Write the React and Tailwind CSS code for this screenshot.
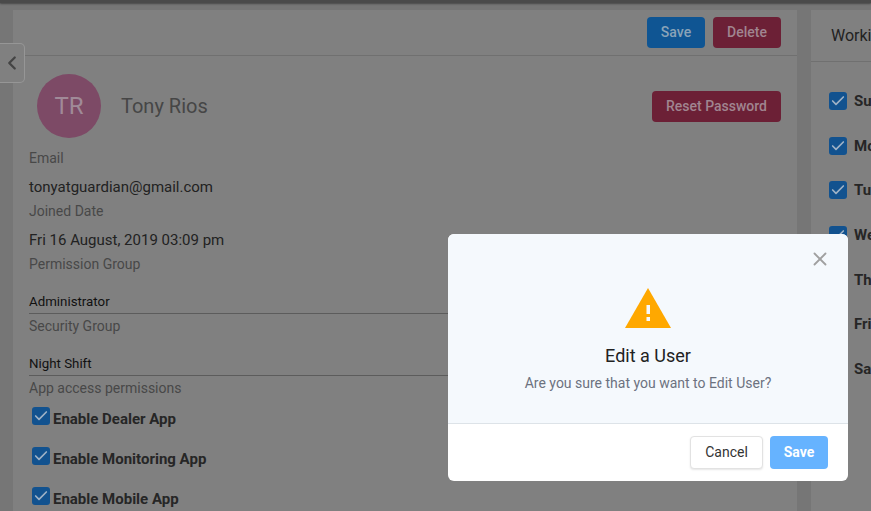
import { ChevronLeft, Check, X } from "lucide-react";

const font = { fontFamily: "Roboto, sans-serif" };

function Box() {
  return (
    <span className="flex h-[18px] w-[18px] shrink-0 items-center justify-center rounded-[3px] bg-[#12528f]">
      <Check size={16} strokeWidth={2.5} className="text-[#9fb2c6]" />
    </span>
  );
}

function AppRow({ label }) {
  return (
    <div className="ml-[3px] flex h-[40px] items-start gap-[3px]">
      <Box />
      <span className="mt-[2px] text-[15px] leading-[20px] font-bold text-[#262626]">{label}</span>
    </div>
  );
}

function DayRow({ label }) {
  return (
    <div className="flex h-[44.7px] items-start gap-[7px]">
      <Box />
      <span className="text-[15px] leading-[18px] font-bold whitespace-nowrap text-[#262626]">{label}</span>
    </div>
  );
}

export default function App() {
  return (
    <div style={font} className="relative h-[511px] w-[871px] overflow-hidden bg-[#767676]">
      <div className="h-[3px] bg-[#4a4a4a] shadow-[0_1px_2px_rgba(0,0,0,0.4)]" />

      <div className="flex gap-[14px] pt-[7px] pl-[13px]">
        {/* user panel */}
        <div className="h-[501px] w-[784px] shrink-0 bg-[#808080]">
          <div className="flex h-[46px] items-start justify-end gap-2 border-b border-[#707070] pt-[7px] pr-4">
            <button className="h-[31px] w-[58px] rounded bg-[#0f5593] text-[14px] font-medium text-[#8aa3b8]">Save</button>
            <button className="h-[31px] w-[68px] rounded bg-[#6c2036] text-[14px] font-medium text-[#a08590]">Delete</button>
          </div>

          <div className="px-4">
            <div className="mt-[18px] flex h-[64px] items-center justify-between pl-2">
              <div className="flex items-center gap-5">
                <div className="flex h-16 w-16 items-center justify-center rounded-full bg-[#7d4a66] text-[24px] text-[#a08a98]">TR</div>
                <span className="text-[20px] text-[#464646]">Tony Rios</span>
              </div>
              <button className="h-[31px] w-[129px] rounded bg-[#6c2036] text-[14px] font-medium text-[#a08590]">Reset Password</button>
            </div>

            <div className="mt-[10px] text-[14px] leading-[20px] text-[#484848]">Email</div>
            <div className="mt-[9px] text-[15px] leading-[20px] text-[#222]">tonyatguardian@gmail.com</div>
            <div className="mt-[4px] text-[14px] leading-[20px] text-[#484848]">Joined Date</div>
            <div className="mt-[9px] text-[15px] leading-[20px] text-[#222]">Fri 16 August, 2019 03:09 pm</div>
            <div className="mt-[4px] text-[14px] leading-[20px] text-[#484848]">Permission Group</div>

            <div className="mt-[18px] border-b border-[#5c5c5c] pb-[1px] text-[13.3px] leading-[20px] text-[#111]">Administrator</div>
            <div className="mt-[2px] text-[14px] leading-[20px] text-[#484848]">Security Group</div>
            <div className="mt-[18px] border-b border-[#5c5c5c] pb-[1px] text-[13.3px] leading-[20px] text-[#111]">Night Shift</div>
            <div className="mt-[2px] mb-[9px] text-[14px] leading-[20px] text-[#484848]">App access permissions</div>

            <AppRow label="Enable Dealer App" />
            <AppRow label="Enable Monitoring App" />
            <AppRow label="Enable Mobile App" />
          </div>
        </div>

        {/* working days panel */}
        <div className="h-[501px] w-[200px] shrink-0 bg-[#808080]">
          <div className="flex h-[52px] items-center border-b border-[#707070] pl-5 text-[16px] whitespace-nowrap text-[#222]">Working Days</div>
          <div className="pt-[30px] pl-[18px]">
            {["Sunday", "Monday", "Tuesday", "Wednesday", "Thursday", "Friday", "Saturday"].map((d) => (
              <DayRow key={d} label={d} />
            ))}
          </div>
        </div>
      </div>

      <button className="absolute top-[43px] left-0 flex h-[40px] w-[25px] items-center justify-center rounded-r-[5px] border border-l-0 border-[#969696] bg-[#808080] text-[#444]">
        <ChevronLeft size={22} strokeWidth={2.5} />
      </button>

      {/* confirm dialog */}
      <div className="absolute top-[234px] left-[448px] w-[400px] overflow-hidden rounded-md bg-white">
        <div className="relative flex h-[190px] flex-col items-center border-b border-[#dde3e8] bg-[#f5f9fd]">
          <X size={22} strokeWidth={2} className="absolute top-[14px] right-[17px] text-[#a0a0a0]" />
          <svg width="46" height="40" viewBox="0 0 46 40" className="mt-[54px]">
            <path d="M23 0 L46 40 L0 40 Z" fill="#ffa800" />
            <rect x="21.5" y="17" width="3.5" height="9" fill="#f5f9fd" />
            <rect x="21.5" y="29" width="3.5" height="4" fill="#f5f9fd" />
          </svg>
          <div className="mt-[17px] text-[18px] leading-[22px] text-[#222]">Edit a User</div>
          <div className="mt-[7px] text-[14px] leading-[18px] text-[#6c7280]">Are you sure that you want to Edit User?</div>
        </div>
        <div className="flex h-[57px] items-start justify-end gap-[7px] pt-[12px] pr-5">
          <button className="h-[33px] w-[73px] rounded border border-[#e2e2e2] bg-white text-[14px] text-[#333] shadow-[0_1px_2px_rgba(0,0,0,0.1)]">Cancel</button>
          <button className="h-[33px] w-[58px] rounded bg-[#66b3ff] text-[14px] font-bold text-white">Save</button>
        </div>
      </div>
    </div>
  );
}
